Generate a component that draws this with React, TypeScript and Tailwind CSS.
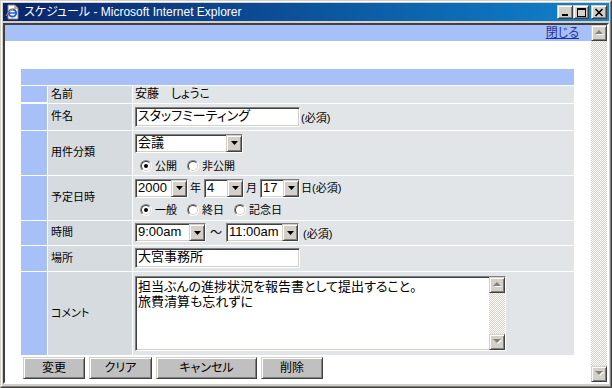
const sunken =
  'border border-t-[#808080] border-l-[#808080] border-b-white border-r-white shadow-[inset_1px_1px_0_#404040,inset_-1px_-1px_0_#d4d0c8]';
const raised =
  'border border-t-[#d4d0c8] border-l-[#d4d0c8] border-b-[#404040] border-r-[#404040] shadow-[inset_1px_1px_0_#ffffff,inset_-1px_-1px_0_#808080]';
const checker =
  '[background-image:repeating-conic-gradient(#d4d0c8_0_25%,#ffffff_0_50%)] [background-size:2px_2px]';

function DropArrow() {
  return (
    <svg width="7" height="4" viewBox="0 0 7 4">
      <path d="M0 0h7L3.5 4z" fill="#000" />
    </svg>
  );
}

function GreyArrow({ up }: { up?: boolean }) {
  return (
    <svg width="9" height="6" viewBox="0 0 9 6">
      {up ? (
        <>
          <path d="M1 5h8L5 1z" fill="#ffffff" />
          <path d="M0 4h8L4 0z" fill="#808080" />
        </>
      ) : (
        <>
          <path d="M1 1h8L5 5z" fill="#ffffff" />
          <path d="M0 0h8L4 4z" fill="#808080" />
        </>
      )}
    </svg>
  );
}

function Select({ value, width }: { value: string; width: string }) {
  return (
    <div className={`${width} h-[19px] bg-white ${sunken} flex items-stretch`}>
      <span className="flex-1 pl-[2px] text-[13px] leading-[15px] text-black">{value}</span>
      <span className={`w-[16px] bg-[#d4d0c8] ${raised} flex items-center justify-center`}>
        <DropArrow />
      </span>
    </div>
  );
}

function Radio({ checked, label }: { checked?: boolean; label: string }) {
  return (
    <span className="flex items-center gap-[3px]">
      <span className="w-[12px] h-[12px] rounded-full bg-white border border-t-[#808080] border-l-[#808080] border-r-white border-b-white flex items-center justify-center">
        <span className="w-[10px] h-[10px] rounded-full border border-t-[#404040] border-l-[#404040] border-r-[#d4d0c8] border-b-[#d4d0c8] flex items-center justify-center">
          {checked && <span className="w-[4px] h-[4px] rounded-full bg-black" />}
        </span>
      </span>
      <span className="text-[11px]">{label}</span>
    </span>
  );
}

function Row({ label, height, children, className = '' }: { label: string; height: string; children: React.ReactNode; className?: string }) {
  return (
    <>
      <div className={`${height} bg-[#a8c0f8]`} />
      <div className="bg-[#d6dbe0] flex items-center pl-[3px] text-[11px]">{label}</div>
      <div className={`bg-[#e1e5e8] pl-[2px] flex flex-col ${className}`}>{children}</div>
    </>
  );
}

function Required() {
  return <span className="text-[11px] ml-[1px]">(必須)</span>;
}

function WinButton({ children, width }: { children: React.ReactNode; width: string }) {
  return (
    <div className={`${width} h-[22px] bg-[#c0c0c0] ${raised} flex items-center justify-center text-[12px]`}>
      {children}
    </div>
  );
}

function TitleButton({ kind }: { kind: 'min' | 'max' | 'close' }) {
  return (
    <div className={`w-[16px] h-[14px] bg-[#d4d0c8] ${raised} flex items-center justify-center`}>
      <svg width="10" height="9" viewBox="0 0 10 9">
        {kind === 'min' && <rect x="2" y="6" width="6" height="2" fill="#000" />}
        {kind === 'max' && (
          <path d="M1 0h9v9H1zM2 2v6h7V2z" fill="#000" fillRule="evenodd" />
        )}
        {kind === 'close' && (
          <path d="M1.5 1l7 7M8.5 1l-7 7" stroke="#000" strokeWidth="1.6" />
        )}
      </svg>
    </div>
  );
}

function IEIcon() {
  return (
    <svg width="16" height="16" viewBox="0 0 16 16">
      <path d="M3 1h7l3 3v11H3z" fill="#fff" stroke="#808080" />
      <path d="M10 1v3h3" fill="none" stroke="#808080" />
      <circle cx="7.5" cy="9" r="3.6" fill="none" stroke="#1c5fd8" strokeWidth="2" />
      <path d="M4.5 9h6" stroke="#1c5fd8" strokeWidth="1.5" />
      <path d="M1 12c2-5 9-9 12-8" fill="none" stroke="#e0a020" strokeWidth="1" />
    </svg>
  );
}

export default function App() {
  return (
    <div className="w-[612px] h-[388px] bg-[#d4d0c8] border border-t-[#d4d0c8] border-l-[#d4d0c8] border-r-[#404040] border-b-[#404040] font-['Liberation_Sans','Noto_Sans_CJK_JP',sans-serif] [font-feature-settings:'palt'] text-black">
      <div className="h-full border border-t-white border-l-white border-r-[#808080] border-b-[#808080] p-px flex flex-col">
        {/* title bar */}
        <div className="h-[18px] flex items-center bg-gradient-to-r from-[#0a246a] to-[#1084d0] pl-[2px] pr-[2px]">
          <IEIcon />
          <span className="ml-[3px] text-white text-[12px] leading-none">スケジュール - Microsoft Internet Explorer</span>
          <div className="ml-auto flex items-center">
            <TitleButton kind="min" />
            <TitleButton kind="max" />
            <div className="w-[2px]" />
            <TitleButton kind="close" />
          </div>
        </div>

        {/* client area */}
        <div className="mt-[2px] mb-[1px] flex-1 flex border-2 border-t-[#404040] border-l-[#404040] border-r-white border-b-white">
          <div className="flex-1 bg-white flex flex-col">
            <div className="h-[16px] bg-[#a8c0f8] flex items-center justify-end pr-[12px]">
              <span className="text-[12px] leading-none text-[#1f2f9c] underline">閉じる</span>
            </div>

            <div className="mt-[28px] ml-[16px] w-[553px] grid grid-cols-[26px_84px_441px] gap-px bg-white">
              <div className="col-span-3 h-[16px] bg-[#a8c0f8]" />

              <Row label="名前" height="h-[16px]" className="justify-center">
                <span className="text-[12px] leading-none">安藤　しょうこ</span>
              </Row>

              <Row label="件名" height="h-[26px]" className="justify-center">
                <div className="flex items-end">
                  <div className={`w-[165px] h-[20px] bg-white ${sunken} pl-[2px] text-[13px] leading-[16px]`}>
                    スタッフミーティング
                  </div>
                  <Required />
                </div>
              </Row>

              <Row label="用件分類" height="h-[44px]" className="pt-[3px]">
                <Select value="会議" width="w-[108px]" />
                <div className="mt-[5px] ml-[5px] flex items-center gap-[10px]">
                  <Radio checked label="公開" />
                  <Radio label="非公開" />
                </div>
              </Row>

              <Row label="予定日時" height="h-[44px]" className="pt-[3px]">
                <div className="flex items-center text-[11px]">
                  <Select value="2000" width="w-[53px]" />
                  <span className="ml-[2px] mr-[3px]">年</span>
                  <Select value="4" width="w-[40px]" />
                  <span className="ml-[2px] mr-[3px]">月</span>
                  <Select value="17" width="w-[40px]" />
                  <span className="ml-[1px]">日(必須)</span>
                </div>
                <div className="mt-[4px] ml-[5px] flex items-center gap-[10px]">
                  <Radio checked label="一般" />
                  <Radio label="終日" />
                  <Radio label="記念日" />
                </div>
              </Row>

              <Row label="時間" height="h-[24px]" className="justify-center">
                <div className="flex items-center">
                  <Select value="9:00am" width="w-[71px]" />
                  <span className="mx-[4px] text-[12px]">～</span>
                  <Select value="11:00am" width="w-[73px]" />
                  <span className="ml-[3px]"><Required /></span>
                </div>
              </Row>

              <Row label="場所" height="h-[25px]" className="justify-center">
                <div className={`w-[165px] h-[20px] bg-white ${sunken} pl-[2px] text-[13px] leading-[16px]`}>
                  大宮事務所
                </div>
              </Row>

              <Row label="コメント" height="h-[83px]" className="pt-[4px]">
                <div className={`w-[371px] h-[75px] bg-white ${sunken} flex`}>
                  <div className="flex-1 pl-[2px] pt-[2px] text-[13px] leading-[15px]">
                    担当ぶんの進捗状況を報告書として提出すること。
                    <br />
                    旅費清算も忘れずに
                  </div>
                  <div className="w-[16px] flex flex-col">
                    <div className={`h-[16px] bg-[#d4d0c8] ${raised} flex items-center justify-center`}>
                      <GreyArrow up />
                    </div>
                    <div className={`flex-1 ${checker}`} />
                    <div className={`h-[16px] bg-[#d4d0c8] ${raised} flex items-center justify-center`}>
                      <GreyArrow />
                    </div>
                  </div>
                </div>
              </Row>
            </div>

            <div className="mt-[2px] ml-[18px] flex gap-[4px]">
              <WinButton width="w-[62px]">変更</WinButton>
              <WinButton width="w-[63px]">クリア</WinButton>
              <WinButton width="w-[101px]">キャンセル</WinButton>
              <WinButton width="w-[62px]">削除</WinButton>
            </div>
          </div>

          {/* page scrollbar */}
          <div className="w-[16px] flex flex-col">
            <div className={`h-[16px] bg-[#d4d0c8] ${raised} flex items-center justify-center`}>
              <GreyArrow up />
            </div>
            <div className={`flex-1 ${checker}`} />
            <div className={`h-[16px] bg-[#d4d0c8] ${raised} flex items-center justify-center`}>
              <GreyArrow />
            </div>
          </div>
        </div>
      </div>
    </div>
  );
}
